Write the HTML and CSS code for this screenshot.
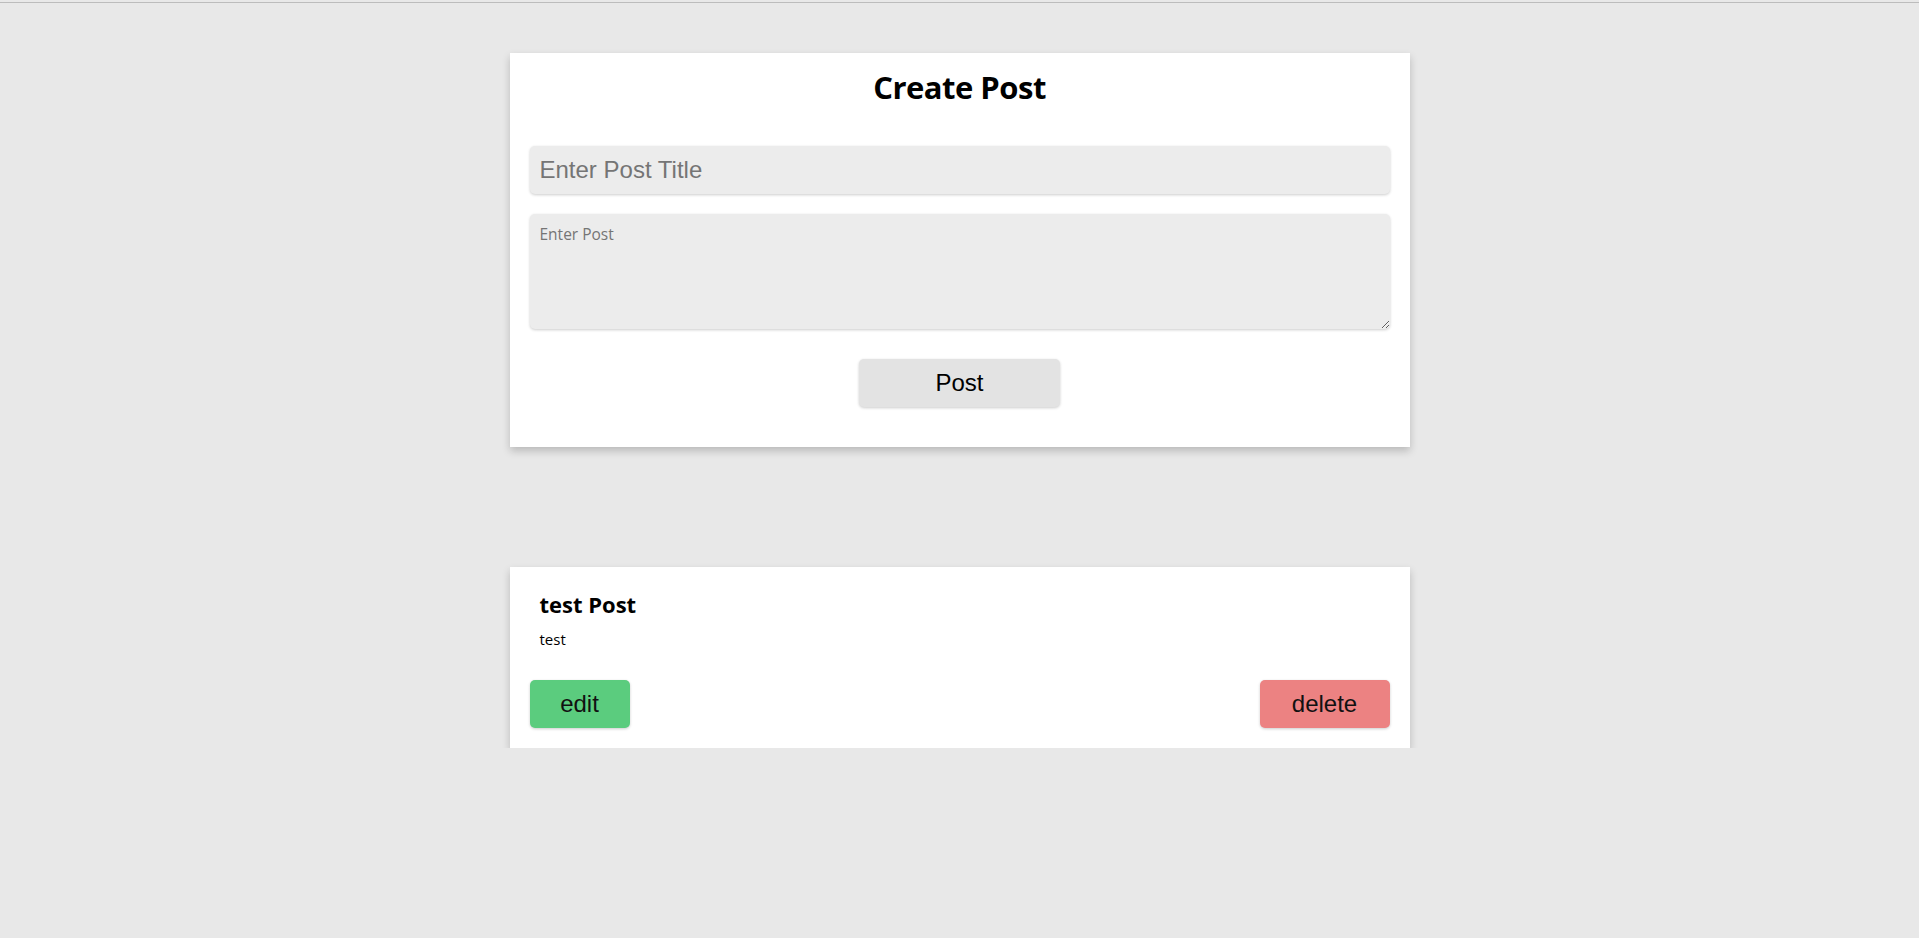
FILE: index.html
```html
<!DOCTYPE html>
<html lang="en">
<head>
<meta charset="utf-8">
<title>Posts</title>
<link rel="stylesheet" href="styles.css">
</head>
<body>
<div class="topline"></div>
<main class="page">
  <section class="card create">
    <h1 class="create-title">Create Post</h1>
    <input class="field title-field" type="text" placeholder="Enter Post Title">
    <textarea class="field body-field" placeholder="Enter Post"></textarea>
    <div class="actions-center">
      <button class="btn btn-post">Post</button>
    </div>
  </section>

  <section class="card post">
    <div class="post-content">
      <h2 class="post-title">test Post</h2>
      <p class="post-body">test</p>
    </div>
    <div class="post-actions">
      <button class="btn btn-edit">edit</button>
      <button class="btn btn-delete">delete</button>
    </div>
  </section>
</main>
</body>
</html>
```

FILE: styles.css
```css
html, body {
  margin: 0;
  padding: 0;
  background: #e8e8e8;
}

body {
  font-family: "Open Sans", "Noto Sans", sans-serif;
  color: #000;
}

.topline {
  height: 1px;
  margin-top: 2px;
  background: #bcbcbc;
}

.page {
  display: flex;
  flex-direction: column;
  align-items: center;
  padding-top: 50px;
}

.card {
  width: 900px;
  box-sizing: border-box;
  background: #fff;
  box-shadow: 0 4px 8px 0 rgba(0, 0, 0, 0.2);
}

.create {
  display: flex;
  flex-direction: column;
  padding: 13px 20px 40px;
}

.create-title {
  margin: 0 0 38px;
  font-size: 31px;
  letter-spacing: -0.5px;
  font-weight: 700;
  text-align: center;
  line-height: normal;
}

.field {
  display: block;
  width: 100%;
  box-sizing: border-box;
  border: none;
  outline: none;
  background: #ececec;
  border-radius: 5px;
  box-shadow: 0 1px 3px rgba(0, 0, 0, 0.2);
  color: #000;
}

.title-field {
  height: 48px;
  padding: 0 10px;
  font-family: "Liberation Sans", Arial, sans-serif;
  font-size: 24px;
}

.title-field::placeholder {
  color: #757575;
}

.body-field {
  height: 115px;
  margin-top: 20px;
  padding: 9px 10px;
  font-family: "Open Sans", "Noto Sans", sans-serif;
  font-size: 15.5px;
  resize: both;
}

.body-field::placeholder {
  color: #757575;
}

.actions-center {
  display: flex;
  justify-content: center;
  margin-top: 30px;
}

.btn {
  height: 48px;
  border: none;
  border-radius: 5px;
  box-shadow: 0 1px 3px rgba(0, 0, 0, 0.2);
  font-family: "Liberation Sans", Arial, sans-serif;
  font-size: 24px;
  color: #111;
  padding: 0;
  cursor: pointer;
}

.btn-post {
  width: 201px;
  background: #e3e3e3;
  color: #000;
}

.post {
  margin-top: 120px;
  padding: 22px 20px 20px;
}

.post-content {
  padding: 0 10px;
}

.post-title {
  margin: 0;
  font-size: 22px;
  font-weight: 700;
  line-height: normal;
}

.post-body {
  margin: 10px 0 0;
  font-size: 15px;
  line-height: normal;
}

.post-actions {
  display: flex;
  justify-content: space-between;
  margin-top: 31px;
}

.btn-edit {
  width: 100px;
  background: #5bcc7e;
}

.btn-delete {
  width: 130px;
  background: #ec8282;
}
```
